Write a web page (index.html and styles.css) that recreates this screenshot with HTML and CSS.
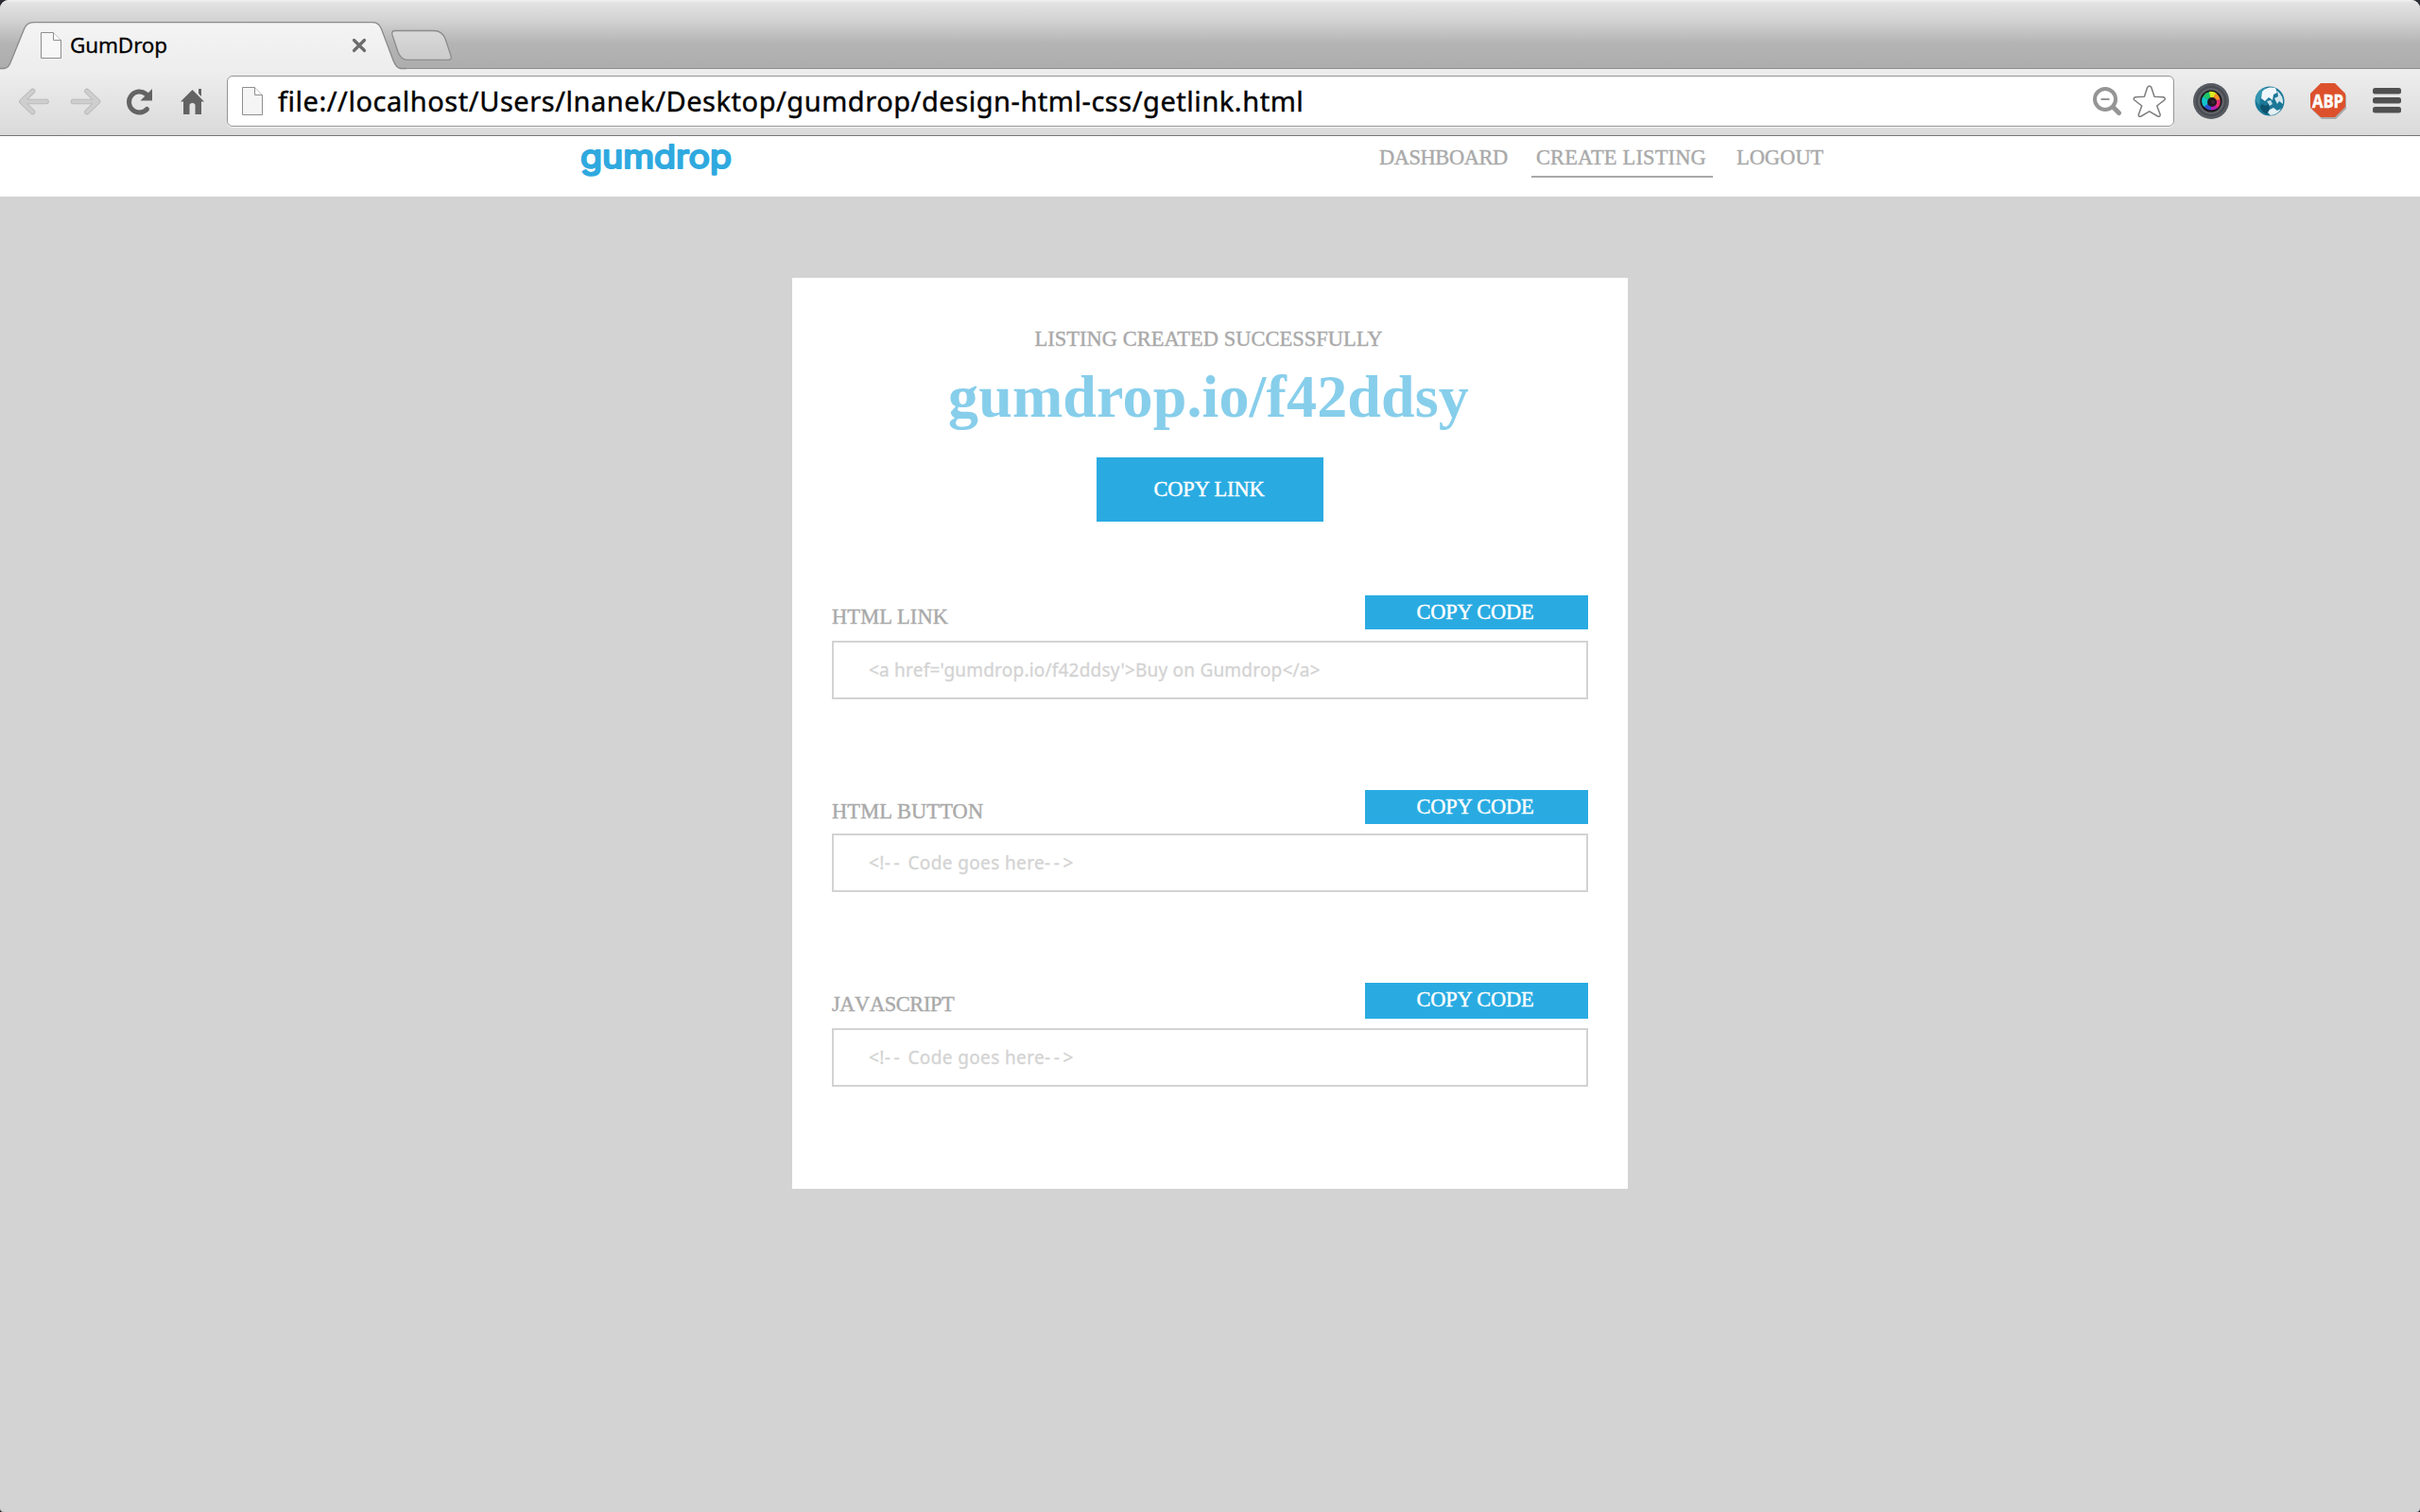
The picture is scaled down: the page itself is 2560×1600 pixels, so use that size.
FILE: index.html
```html
<!DOCTYPE html>
<html lang="en">
<head>
<meta charset="utf-8">
<title>GumDrop</title>
<link rel="stylesheet" href="styles.css">
</head>
<body>
<div class="window">
  <div class="tab-strip">
    <div class="tab">
      <svg class="tab-shape" width="490" height="74" viewBox="0 0 490 74">
        <defs>
          <linearGradient id="tabFill" x1="0" y1="0" x2="0" y2="1"><stop offset="0" stop-color="#f4f4f4"/><stop offset="1" stop-color="#ededed"/></linearGradient>
          <linearGradient id="newTab" x1="0" y1="0" x2="0" y2="1"><stop offset="0" stop-color="#d9d9d9"/><stop offset="1" stop-color="#cbcbcb"/></linearGradient>
        </defs>
        <path d="M3 74V72.5H4C9 72 10 69 12 64L25 32C27 27 29 23.7 36 23.7H394C400 23.7 402 27 404 32L416 64C418 69 420 72.3 424 72.5V74Z" fill="url(#tabFill)"/>
        <path d="M0 72.5H4C9 72 10 69 12 64L25 32C27 27 29 23.7 36 23.7H394C400 23.7 402 27 404 32L416 64C418 69 420 72.3 424 72.5H430" fill="none" stroke="#8a8a8a" stroke-width="1.3"/>
        <path d="M418 32.5H459C466 32.500 469 36 471 41L477 59C478 62 477 63.300 474 63.300H431C426 63.300 423 60 421 55L415 37C414.300 34 415 32.500 418 32.500Z" fill="url(#newTab)" stroke="#8c8c8c" stroke-width="1.3"/>
      </svg>
      <svg class="tab-page" width="24" height="30" viewBox="0 0 24 30"><path d="M1.500 1.500H14.500L22.500 9.500V28.500H1.500Z" fill="#f7f7f7" stroke="#8f8f8f"/><path d="M14.500 1.500V9.500H22.500" fill="#fff" stroke="#8f8f8f"/></svg>
      <span class="tab-title">GumDrop</span>
      <svg class="tab-close" width="16" height="16" viewBox="0 0 16 16"><path d="M2.500 2.500L13.500 13.500M13.500 2.500L2.500 13.500" stroke="#6c6c6c" stroke-width="3.200" stroke-linecap="round"/></svg>
    </div>
  </div>

  <div class="toolbar">
    <svg class="back" width="34" height="30" viewBox="19 92 34 30"><path d="M34.500 96.500L23 107.500L34.500 118.500M24 107.500H49" fill="none" stroke="#b5b5b5" stroke-width="5.600" stroke-linecap="round" stroke-linejoin="round"/><path d="M34.500 96.500L23 107.500L34.500 118.500M24 107.500H49" fill="none" stroke="#cecece" stroke-width="4" stroke-linecap="round" stroke-linejoin="round"/></svg>
    <svg class="forward" width="34" height="30" viewBox="74 92 34 30"><path d="M92 96.500L103.500 107.500L92 118.500M77.500 107.500H103" fill="none" stroke="#b5b5b5" stroke-width="5.600" stroke-linecap="round" stroke-linejoin="round"/><path d="M92 96.500L103.500 107.500L92 118.500M77.500 107.500H103" fill="none" stroke="#cecece" stroke-width="4" stroke-linecap="round" stroke-linejoin="round"/></svg>
    <svg class="reload" width="30" height="30" viewBox="133 92 30 30"><path d="M155.500 115.500A11 11 0 1 1 154.500 99.500" fill="none" stroke="#636363" stroke-width="5" stroke-linecap="round"/><path d="M161 94V106.500H148.500Z" fill="#636363"/></svg>
    <svg class="home" width="27" height="30" viewBox="190 92 27 30"><path d="M203.500 95L216 107.500H213V121H206.500V111.500Q206.500 109 203.500 109Q200.500 109 200.500 111.500V121H194V107.500H191ZM210 94H213V102L210 99Z" fill="#636363"/></svg>
    <div class="omnibox">
      <svg class="url-page" width="24" height="32" viewBox="0 0 24 32"><path d="M1.500 1.500H14.500L22.500 9.500V30.500H1.500Z" fill="#f5f5f5" stroke="#8f8f8f"/><path d="M14.500 1.500V9.500H22.500" fill="#fff" stroke="#8f8f8f"/></svg>
      <span class="url">file://localhost/Users/lnanek/Desktop/gumdrop/design-html-css/getlink.html</span>
      <svg class="zoom-icon" width="32" height="32" viewBox="2213 91 32 32"><circle cx="2227" cy="105" r="11" fill="none" stroke="#959595" stroke-width="4"/><path d="M2222.500 105H2231.500" stroke="#959595" stroke-width="2"/><path d="M2236 114L2241.500 119.500" stroke="#959595" stroke-width="5" stroke-linecap="round"/></svg>
      <svg class="star" width="36" height="36" viewBox="2256 88 36 36"><path d="M2271.600 91.500Q2273.700 88.500 2275.800 91.500L2279 101.200L2288.500 101.800Q2291.500 102.800 2289.500 105L2281.700 111L2285.200 120.300Q2285.200 123 2282.500 122L2273.700 116.800L2265 122Q2262 123 2262.300 120.300L2265.700 111L2258 105Q2256 102.800 2259 101.800L2268.400 101.200Z" fill="#fff" stroke="#7d7d7d" stroke-width="1.500" stroke-linejoin="round"/></svg>
    </div>
    <div class="extensions">
      <svg width="38" height="38" viewBox="0 0 38 38">
        <circle cx="19" cy="19" r="19" fill="#565b62"/><circle cx="19" cy="19" r="15" fill="#5f6369" stroke="#484b50" stroke-width="2"/><circle cx="19" cy="19" r="11.500" fill="#171419"/>
        <path d="M19 19L10 15A10 10 0 0 1 18 9Z" fill="#1fc46b"/><path d="M19 19L17 9A10 10 0 0 1 25 11Z" fill="#dcec22"/><path d="M19 19L24 10.500A10 10 0 0 1 28.500 18Z" fill="#f59126"/><path d="M19 19L28.500 17A10 10 0 0 1 25 27Z" fill="#e52e70"/><path d="M19 19L26 26A10 10 0 0 1 18 28.500Z" fill="#b41fb4"/><path d="M19 19L19 28.500A10 10 0 0 1 11 24Z" fill="#2d55cf"/><path d="M19 19L11.500 25A10 10 0 0 1 10 14.500Z" fill="#12c3cb"/>
        <circle cx="20" cy="20" r="5" fill="#201820"/><circle cx="21" cy="20" r="2" fill="#3d2838"/>
      </svg>
      <svg class="globe" width="34" height="34" viewBox="0 0 34 34">
        <circle cx="17" cy="17" r="15.500" fill="#1b7897"/><path d="M2 14Q4 4 14 2Q7 9 6 21Q2 18 2 14Z" fill="#3495b1"/>
        <path d="M9 7Q14 1 23 3L25 8L21 10L20 16L16 13L12 17L8 14Z" fill="#f0f7fa"/><path d="M25 6Q32 12 31 20L27 17L25 20L22 14L26 12Z" fill="#d5e8ee"/><path d="M8 20L13 22L16 20L17 25L14 31Q9 29 7 24Z" fill="#0e536e"/><path d="M17 26L21 24L25 27L29 25Q26 31 18 32L15 29Z" fill="#e5f1f5"/><path d="M14 17L18 16L20 20L17 22Z" fill="#c4dfe8"/>
      </svg>
      <svg class="abp" width="40" height="38" viewBox="0 0 40 38"><path d="M12 2H27L38 13V27L27 38H12L2 28Z" fill="#aaa"/><path d="M11 0H26L37 11V25L26 36H11L0 26V11Z" fill="#dc512c"/><text x="2" y="25.500" textLength="33" lengthAdjust="spacingAndGlyphs" class="abp-text">ABP</text></svg>
      <svg class="menu" width="30" height="28" viewBox="0 0 30 28"><rect width="30" height="6.500" rx="2.500" fill="#505050"/><rect y="10" width="30" height="6.500" rx="2.500" fill="#505050"/><rect y="20" width="30" height="6.500" rx="2.500" fill="#505050"/></svg>
    </div>
  </div>

  <header class="site-header">
    <svg class="logo" width="164" height="52" viewBox="0 0 164 52"><text class="logo-text" x="2" y="34" textLength="160" lengthAdjust="spacingAndGlyphs">gumdrop</text></svg>
    <nav class="nav">
      <a class="nav-item dashboard">DASHBOARD</a>
      <a class="nav-item create">CREATE LISTING</a>
      <a class="nav-item logout">LOGOUT</a>
    </nav>
  </header>

  <main class="page">
    <section class="card">
      <p class="message">LISTING CREATED SUCCESSFULLY</p>
      <h1 class="link">gumdrop.io/f42ddsy</h1>
      <button class="copy-link">COPY LINK</button>
      <div class="snippet">
        <div class="snippet-head"><span class="label">HTML LINK</span><button class="copy-code">COPY CODE</button></div>
        <div class="code anchor-code">&lt;a href='gumdrop.io/f42ddsy'&gt;Buy on Gumdrop&lt;/a&gt;</div>
      </div>
      <div class="snippet html-button">
        <div class="snippet-head"><span class="label">HTML BUTTON</span><button class="copy-code">COPY CODE</button></div>
        <div class="code">&lt;!<span class="dashes">--</span> Code goes here<span class="dashes">--</span>&gt;</div>
      </div>
      <div class="snippet javascript">
        <div class="snippet-head"><span class="label">JAVASCRIPT</span><button class="copy-code">COPY CODE</button></div>
        <div class="code">&lt;!<span class="dashes">--</span> Code goes here<span class="dashes">--</span>&gt;</div>
      </div>
    </section>
  </main>
</div>
</body>
</html>
```
FILE: styles.css
```css
* { box-sizing: border-box; }
html { background: #2b2b33; }
body { margin: 0; font-family: "Liberation Serif", serif; font-size: 22.4px; }
svg { display: block; flex: none; }
button { border: 0; padding: 0; font: inherit; }

.window {
  width: 2560px; height: 1600px; overflow: hidden;
  display: flex; flex-direction: column;
  border-radius: 9px 9px 4px 4px; background: #d3d3d3;
}

/* Browser frame */
.tab-strip {
  height: 72px; flex: none;
  background: linear-gradient(#f2f2f2 0, #e2e2e2 3px, #d4d4d4 20px, #b4b4b4 46px, #adadad 100%);
}
.tab {
  position: relative; width: 424px; height: 72px; padding: 24px 36px 0 42px;
  display: flex; align-items: center;
}
.tab-shape { position: absolute; left: 0; top: 0; }
.tab-page, .tab-title, .tab-close { position: relative; }
.tab-title {
  margin-left: 8px; flex: 1;
  font: 22.5px/30px "Noto Sans", sans-serif; letter-spacing: -.15px; color: #000;
  -webkit-text-stroke: .3px #000;
}
.toolbar {
  height: 72px; flex: none; padding: 0 20px 2px 19px;
  display: flex; align-items: center;
  border-top: 1px solid #8e8e8e; border-bottom: 1px solid #757575;
  background: linear-gradient(#eeeeee, #dadada);
}
.forward { margin-left: 21px; }
.reload { margin-left: 25px; }
.home { margin-left: 27px; }
.omnibox {
  width: 2060px; height: 54px; margin-left: 23px; padding: 0 7px 0 14px;
  display: flex; align-items: center;
  border: 1px solid #959595; border-radius: 6px; background: #fff;
  box-shadow: 0 1px 0 #f3f3f3;
}
.url {
  margin-left: 15px; padding-bottom: 2px; flex: 1; white-space: nowrap;
  font-family: "Noto Sans", sans-serif; font-size: 29px; letter-spacing: .54px; color: #000;
  -webkit-text-stroke: .4px #000;
}
.star { margin-left: 11px; }
.extensions { flex: 1; margin-left: 20px; display: flex; align-items: center; }
.globe { margin-left: 26px; }
.abp { margin-left: 26px; }
.abp-text { font: bold 19px "Open Sans", sans-serif; fill: #fff; stroke: #fff; stroke-width: .5px; }
.menu { margin-left: auto; }

/* Site header */
.site-header {
  height: 64px; flex: none; padding-left: 612px; display: flex; background: #fff;
}
.logo { overflow: visible; }
.logo-text {
  font: 400 34px "Inter", sans-serif; fill: #2fa9df;
  stroke: #2fa9df; stroke-width: 2.2px; stroke-linejoin: round;
}
.nav { display: flex; align-items: flex-start; gap: 20px; margin-left: 678px; padding-top: 10px; }
.nav-item {
  padding: 0 5px 6px; line-height: 26px; color: #a9a9a9; white-space: nowrap;
  -webkit-text-stroke: .4px #a9a9a9;
}
.dashboard { width: 146px; letter-spacing: -.4px; }
.create { width: 192px; border-bottom: 2px solid #a9a9a9; letter-spacing: .19px; }
.logout { letter-spacing: 0; }

/* Listing card */
.page { padding-top: 86px; }
.card {
  width: 884px; height: 964px; margin: 0 auto; padding: 52px 42px 0;
  display: flex; flex-direction: column; background: #fff;
}
.message {
  margin: 0; padding-right: 3px; line-height: 26px; text-align: center;
  color: #a9a9a9; letter-spacing: .07px; -webkit-text-stroke: .4px #a9a9a9;
}
.link {
  margin: 12px 0 28px; font-size: 64px; line-height: 72px; text-align: center;
  color: #87ceeb; letter-spacing: .15px; text-indent: -3px;
}
.copy-link {
  width: 240px; height: 68px; align-self: center; padding-right: 2px;
  background: #29abe2; color: #fff; letter-spacing: -.08px; -webkit-text-stroke: .4px #fff;
}
.snippet { margin-top: 78px; }
.snippet + .snippet { margin-top: 96px; }
.snippet-head {
  height: 36px; margin-bottom: 12px;
  display: flex; align-items: flex-end; justify-content: space-between;
}
.label { line-height: 26px; color: #a9a9a9; letter-spacing: .15px; -webkit-text-stroke: .4px #a9a9a9; }
.copy-code {
  width: 236px; height: 36px; padding-right: 3px;
  background: #29abe2; color: #fff; letter-spacing: -.15px; -webkit-text-stroke: .4px #fff;
}
.code {
  height: 62px; padding: 0 37px; display: flex; align-items: center;
  border: 2px solid #d3d3d3; color: #d3d3d3; white-space: pre;
  font-family: "Noto Sans", sans-serif; font-size: 19px; letter-spacing: .37px;
  -webkit-text-stroke: .3px #d3d3d3;
}
.dashes { letter-spacing: 3.6px; }
.anchor-code { letter-spacing: .21px; }
.html-button .snippet-head { margin-bottom: 10px; }
.javascript .snippet-head { height: 38px; margin-bottom: 10px; }
.javascript .label { padding-bottom: 2px; font-kerning: none; letter-spacing: -.38px; }
.javascript .copy-code { height: 38px; padding-bottom: 2px; }
```
